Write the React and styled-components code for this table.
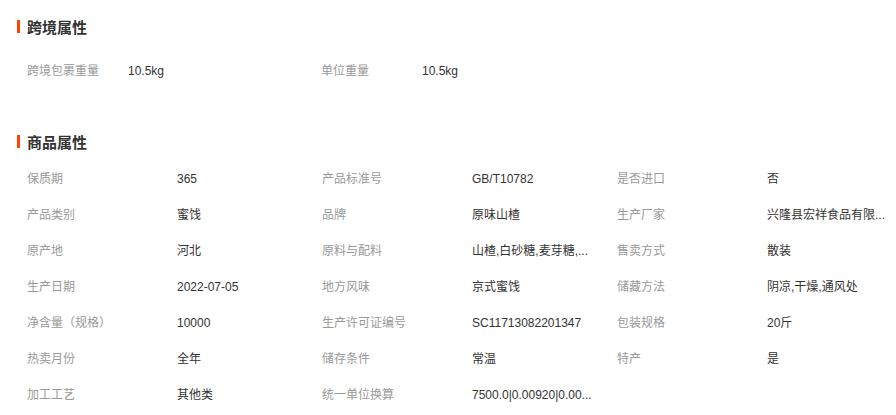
import React from 'react'
import styled, { createGlobalStyle } from 'styled-components'

const GlobalStyle = createGlobalStyle`
  body {
    margin: 0;
    background: #fff;
    font-family: "Liberation Sans", "Noto Sans CJK SC", sans-serif;
  }
`

const crossBorder = [
  ['跨境包裹重量', '10.5kg'],
  ['单位重量', '10.5kg']
]

const goods = [
  ['保质期', '365'],
  ['产品标准号', 'GB/T10782'],
  ['是否进口', '否'],
  ['产品类别', '蜜饯'],
  ['品牌', '原味山楂'],
  ['生产厂家', '兴隆县宏祥食品有限...'],
  ['原产地', '河北'],
  ['原料与配料', '山楂,白砂糖,麦芽糖,...'],
  ['售卖方式', '散装'],
  ['生产日期', '2022-07-05'],
  ['地方风味', '京式蜜饯'],
  ['储藏方法', '阴凉,干燥,通风处'],
  ['净含量（规格）', '10000'],
  ['生产许可证编号', 'SC11713082201347'],
  ['包装规格', '20斤'],
  ['热卖月份', '全年'],
  ['储存条件', '常温'],
  ['特产', '是'],
  ['加工工艺', '其他类'],
  ['统一单位换算', '7500.0|0.00920|0.00...']
]

const Section = ({ title, items, wide }) => (
  <Block>
    <Title>{title}</Title>
    <Grid $wide={wide}>
      {items.map(([label, value]) => (
        <React.Fragment key={label}>
          <Label>{label}</Label>
          <Value>{value}</Value>
        </React.Fragment>
      ))}
    </Grid>
  </Block>
)

export default function App() {
  return (
    <>
      <GlobalStyle />
      <Page>
        <Section title="跨境属性" items={crossBorder} wide />
        <Section title="商品属性" items={goods} />
      </Page>
    </>
  )
}

const Page = styled.div`
  padding: 16px 0 0 17px;
  display: flex;
  flex-direction: column;
  gap: 42px;
`

const Block = styled.section`
  display: flex;
  flex-direction: column;
`

const Title = styled.h3`
  margin: 0;
  display: flex;
  align-items: center;
  gap: 7px;
  height: 20px;
  font-size: 15px;
  font-weight: bold;
  color: #333;

  &::before {
    content: '';
    width: 3px;
    height: 13px;
    background: #ff4400;
  }
`

const Grid = styled.div`
  display: grid;
  grid-template-columns: ${(p) => (p.$wide ? 'repeat(2, 101px 193px)' : 'repeat(3, 150px 145px)')};
  grid-auto-rows: 36px;
  margin-top: ${(p) => (p.$wide ? '17px' : '10px')};
  padding-left: 10px;
  font-size: 12px;
  line-height: 16px;
`

const Label = styled.div`
  align-self: center;
  color: #999;
  white-space: nowrap;
`

const Value = styled.div`
  align-self: center;
  color: #333;
  white-space: nowrap;
`
